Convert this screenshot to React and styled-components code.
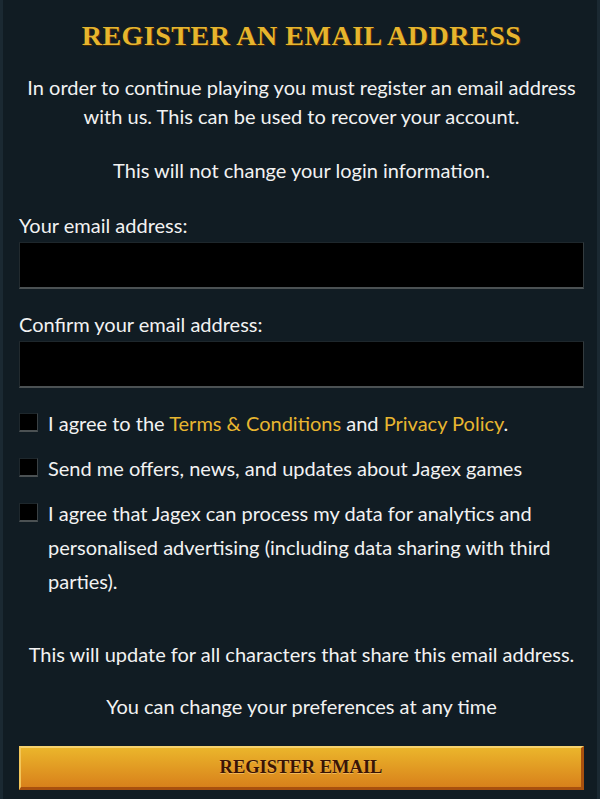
import styled, { createGlobalStyle } from 'styled-components';

const GlobalStyle = createGlobalStyle`
  html, body {
    margin: 0;
    padding: 0;
    background: #111c23;
  }
  body {
    font-family: Lato, "Open Sans", sans-serif;
  }
`;

const Panel = styled.div`
  box-sizing: border-box;
  width: 600px;
  height: 799px;
  background: #111c23;
  border-left: 3px solid #1b2932;
  border-right: 3px solid #1b2932;
  padding: 18px 13px 0 16px;
  color: #f2f2f2;
`;

const Title = styled.h1`
  margin: 0;
  text-align: center;
  font-family: "Liberation Serif", "DejaVu Serif", serif;
  font-weight: bold;
  font-size: 28px;
  line-height: 36px;
  letter-spacing: 0.5px;
  color: #e6b52e;
  text-shadow: 1px 1px 0 #4a2a05;
`;

const Text = styled.p`
  margin: ${(p) => p.$mt || 0}px 0 0;
  text-align: center;
  font-size: 20px;
  line-height: 29px;
`;

const Field = styled.div`
  margin-top: ${(p) => p.$mt}px;
  display: flex;
  flex-direction: column;
  gap: 5px;
`;

const Label = styled.label`
  font-size: 20px;
  line-height: 24px;
`;

const Input = styled.input`
  box-sizing: border-box;
  width: 100%;
  height: 47px;
  background: #000;
  border: none;
  border-top: 1px solid #1e272c;
  border-bottom: 2px solid #4b5153;
  border-left: 1px solid #222a2e;
  border-right: 1px solid #333b3e;
  outline: none;
  color: #fff;
  font-size: 18px;
  padding: 0 10px;
`;

const Checks = styled.div`
  margin-top: 18px;
  display: flex;
  flex-direction: column;
  gap: 11px;
`;

const CheckRow = styled.label`
  display: flex;
  align-items: flex-start;
  gap: 10px;
  font-size: 20px;
  line-height: 34px;
`;

const Box = styled.input.attrs({ type: 'checkbox' })`
  appearance: none;
  flex: none;
  box-sizing: border-box;
  width: 19px;
  height: 19px;
  margin: 7px 0 0;
  background: #000;
  border: 1px solid #1e272c;
  border-bottom: 2px solid #4b5153;
  border-right: 1px solid #3a4144;
`;

const Link = styled.a`
  color: #e8b630;
  text-decoration: none;
`;

const Button = styled.button`
  display: block;
  box-sizing: border-box;
  width: 100%;
  height: 44px;
  margin-top: 25px;
  background: linear-gradient(#ebb52b, #d8811b);
  border-style: solid;
  border-width: 2px 3px 3px 2px;
  border-color: #f6d26e #a8500e #a8500e #f2c65a;
  font-family: "Liberation Serif", "DejaVu Serif", serif;
  font-weight: bold;
  font-size: 18.5px;
  color: #3a1406;
  text-shadow: 0 1px 0 rgba(255, 220, 150, 0.5);
  cursor: pointer;
`;

export default function App() {
  return (
    <>
      <GlobalStyle />
      <Panel>
        <Title>REGISTER AN EMAIL ADDRESS</Title>
        <Text $mt={19}>
          In order to continue playing you must register an email address with us. This can be
          used to recover your account.
        </Text>
        <Text $mt={25}>This will not change your login information.</Text>
        <Field $mt={28}>
          <Label>Your email address:</Label>
          <Input type="email" />
        </Field>
        <Field $mt={23}>
          <Label>Confirm your email address:</Label>
          <Input type="email" />
        </Field>
        <Checks>
          <CheckRow>
            <Box />
            <span>
              I agree to the <Link>Terms &amp; Conditions</Link> and <Link>Privacy Policy</Link>.
            </span>
          </CheckRow>
          <CheckRow>
            <Box />
            <span>Send me offers, news, and updates about Jagex games</span>
          </CheckRow>
          <CheckRow>
            <Box />
            <span>
              I agree that Jagex can process my data for analytics and personalised advertising
              (including data sharing with third parties).
            </span>
          </CheckRow>
        </Checks>
        <Text $mt={42}>This will update for all characters that share this email address.</Text>
        <Text $mt={23}>You can change your preferences at any time</Text>
        <Button>REGISTER EMAIL</Button>
      </Panel>
    </>
  );
}
